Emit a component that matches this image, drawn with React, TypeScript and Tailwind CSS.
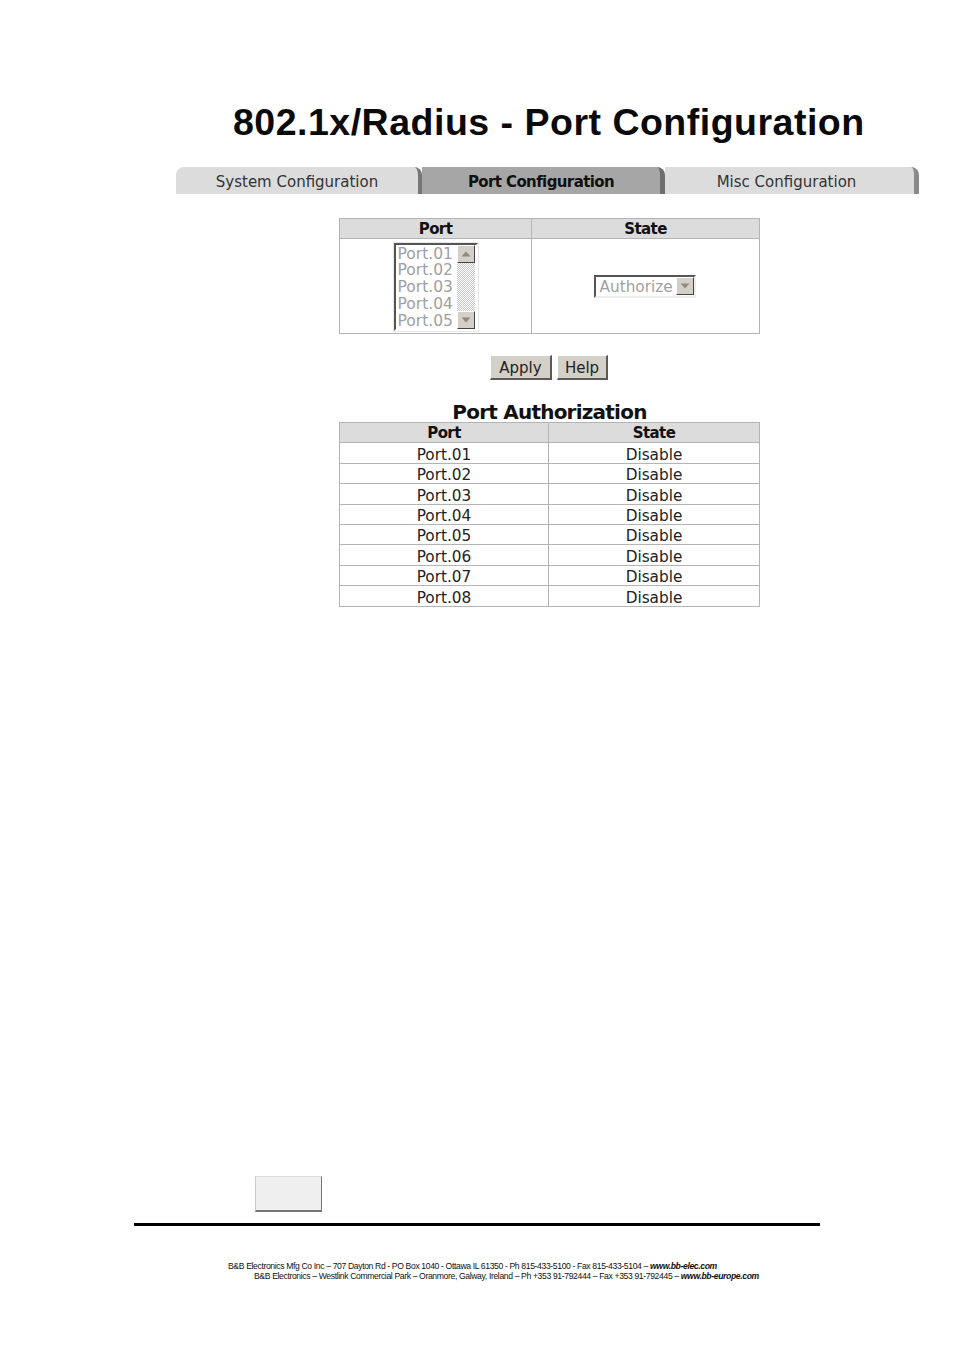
const rows = ["01", "02", "03", "04", "05", "06", "07", "08"];
const ports = ["Port.01", "Port.02", "Port.03", "Port.04", "Port.05"];
const ui = "font-['DejaVu_Sans',Verdana,sans-serif]";

function Tab({ label, active, w }: { label: string; active?: boolean; w: string }) {
  return (
    <div className={`${w} h-[27px] flex items-center justify-center rounded-tr-[8px] border-r-[5px] pt-[3px] ${active ? "bg-[#a6a6a6] border-r-[#6e6e6e] font-bold text-[15px] tracking-[-0.6px] text-[#111]" : "bg-[#dcdcdc] border-r-[#8a8a8a] text-[15px] text-[#333] pr-[6px]"}`}>
      {label}
    </div>
  );
}

function Arrow({ up }: { up?: boolean }) {
  return (
    <div className="w-[18px] h-[18px] shrink-0 bg-[#d4d0c8] border border-t-white border-l-white border-r-[#444] border-b-[#444] flex items-center justify-center">
      <svg width="10" height="6" viewBox="0 0 10 6">
        <path d={up ? "M5 0.5 L9.5 5.5 L0.5 5.5 Z" : "M0.5 0.5 L9.5 0.5 L5 5.5 Z"} fill="#8d8a84" />
      </svg>
    </div>
  );
}

function Btn({ label, w }: { label: string; w: string }) {
  return (
    <div className={`${w} h-[25px] bg-[#d4d0c8] border border-t-white border-l-white border-r-[2px] border-b-[2px] border-r-[#5a5a5a] border-b-[#5a5a5a] flex items-center justify-center pt-[2px] text-[15px] text-[#222]`}>
      {label}
    </div>
  );
}

export default function App() {
  return (
    <div className={`w-[954px] h-[1350px] bg-white flex flex-col ${ui} text-[#222] overflow-hidden`}>
      <h1 className="mt-[100px] ml-[233px] h-[45px] text-[37.5px] leading-[45px] tracking-[0.5px] font-bold text-[#0a0a0a] font-['Liberation_Sans',Arial,sans-serif] whitespace-nowrap">
        802.1x/Radius - Port Configuration
      </h1>

      <div className="mt-[22px] ml-[176px] flex w-[743px]">
        <div className="w-[246px] h-[27px] flex items-center justify-center rounded-tr-[8px] border-r-[4px] border-r-[#777] bg-[#dcdcdc] text-[15px] text-[#333] rounded-tl-[8px] pt-[3px]">System Configuration</div>
        <Tab label="Port Configuration" active w="w-[243px]" />
        <Tab label="Misc Configuration" w="w-[254px]" />
      </div>

      <div className="mt-[24px] ml-[339px] w-[421px] h-[116px] border border-[#b4b4b4] flex flex-col">
        <div className="flex h-[20px] bg-[#dcdcdc] border-b border-[#b4b4b4] text-[15px] tracking-[-0.6px] leading-[21px] font-bold text-center text-[#111]">
          <div className="w-[192px] border-r border-[#b4b4b4]">Port</div>
          <div className="flex-1">State</div>
        </div>
        <div className="flex flex-1">
          <div className="w-[192px] border-r border-[#b4b4b4] flex items-center justify-center pt-[1px]">
            <div className="w-[86px] h-[90px] border border-[#e8e8e8]">
              <div className="w-full h-full border-[2px] border-t-[#555] border-l-[#555] border-r-white border-b-white flex bg-white">
                <div className="w-[61px] pl-[2px] pt-[1px] text-[15.5px] leading-[16.8px] text-[#a0a0a0]">
                  {ports.map((p) => (
                    <div key={p}>{p}</div>
                  ))}
                </div>
                <div className="w-[18px] flex flex-col justify-between bg-[repeating-conic-gradient(#c8c8c8_0_25%,#fff_0_50%)] bg-[length:2px_2px]">
                  <Arrow up />
                  <Arrow />
                </div>
              </div>
            </div>
          </div>
          <div className="flex-1 flex items-center justify-center">
            <div className="w-[102px] h-[23px] border-[2px] border-t-[#555] border-l-[#555] border-r-[#eee] border-b-[#eee] flex items-center justify-between text-[15.3px] text-[#a0a0a0] pl-[4px] mr-[2px]">
              <span className="pt-[3px]">Authorize</span>
              <Arrow />
            </div>
          </div>
        </div>
      </div>

      <div className="mt-[21px] ml-[490px] flex gap-[5px]">
        <Btn label="Apply" w="w-[62px]" />
        <Btn label="Help" w="w-[51px]" />
      </div>

      <div className="mt-[20px] ml-[339px] w-[421px] h-[22px] text-center text-[20px] tracking-[-0.78px] leading-[24px] font-bold text-[#111]">Port Authorization</div>

      <div className="ml-[339px] w-[421px] border-t border-x border-[#b4b4b4] flex flex-col text-[15.3px] text-center">
        <div className="flex h-[20.4px] leading-[20px] bg-[#dcdcdc] border-b border-[#b4b4b4] font-bold text-[15px] tracking-[-0.6px] text-[#111]">
          <div className="w-[209px] border-r border-[#b4b4b4]">Port</div>
          <div className="flex-1">State</div>
        </div>
        {rows.map((r) => (
          <div key={r} className="flex h-[20.4px] leading-[20px] border-b border-[#b4b4b4]">
            <div className="w-[209px] border-r border-[#b4b4b4] pt-[1.5px]">Port.{r}</div>
            <div className="flex-1 pt-[1.5px]">Disable</div>
          </div>
        ))}
      </div>

      <div className="mt-[569px] ml-[255px] w-[67px] h-[36px] bg-[#efefef] border border-t-[#ddd] border-l-[#ccc] border-r-[#777] border-b-[2px] border-b-[#777]" />

      <div className="mt-[11px] ml-[134px] w-[686px] h-[3px] bg-black" />

      <div className="mt-[35px] text-[8.6px] tracking-[-0.36px] leading-[10px] text-[#111] font-['Liberation_Sans',Arial,sans-serif] whitespace-nowrap">
        <div className="ml-[228px]">
          B&amp;B Electronics Mfg Co Inc – 707 Dayton Rd - PO Box 1040 - Ottawa IL 61350 - Ph 815-433-5100 - Fax 815-433-5104 – <b><i>www.bb-elec.com</i></b>
        </div>
        <div className="ml-[254px]">
          B&amp;B Electronics – Westlink Commercial Park – Oranmore, Galway, Ireland – Ph +353 91-792444 – Fax +353 91-792445 – <b><i>www.bb-europe.com</i></b>
        </div>
      </div>
    </div>
  );
}
